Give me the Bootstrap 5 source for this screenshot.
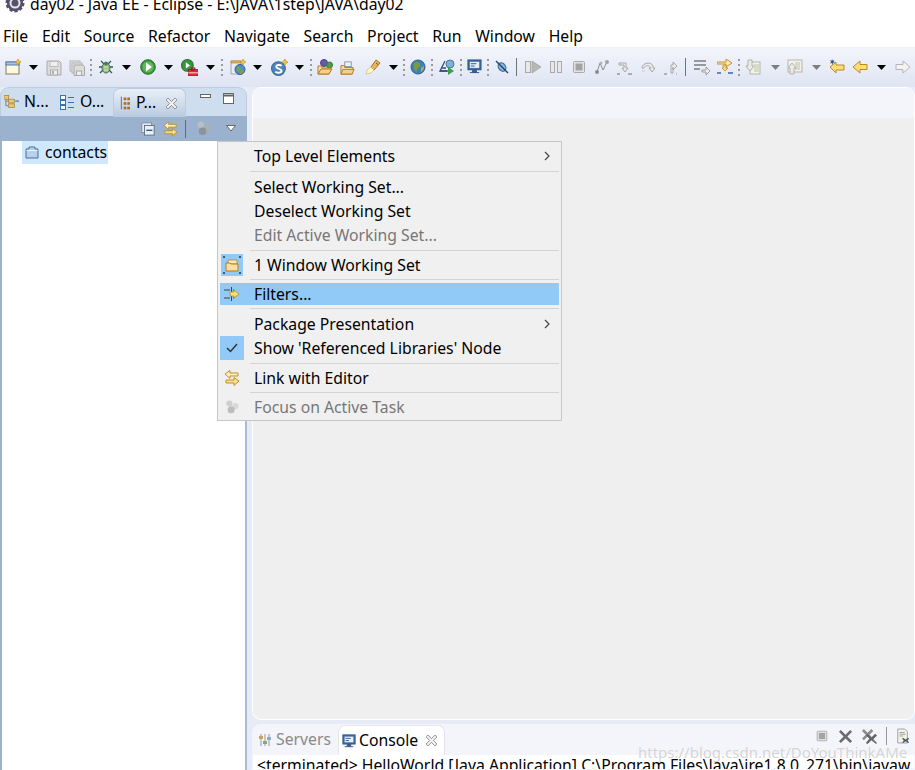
<!DOCTYPE html>
<html lang="en">
<head>
    <meta charset="UTF-8">
    <meta name="viewport" content="width=device-width, initial-scale=1.0">
    <title>day02 - Java EE - Eclipse</title>
    <link href="https://cdn.jsdelivr.net/npm/bootstrap@5.3.0/dist/css/bootstrap.min.css" rel="stylesheet">
    <style>
        html, body { height: 770px; overflow: hidden; }
        body { font-family: "Noto Sans", "Open Sans", sans-serif; font-size: 15.75px; color: #000; background: #e7ebf6; }
        svg { display: block; flex: none; }
        .title-row { height: 25px; background: #fff; padding-left: 5px; gap: 5px; line-height: 9px; }
        .menu-row { height: 22px; background: #fff; line-height: 22px; padding-left: 3px; gap: 13.7px; }
        .tool-row { height: 40px; background: linear-gradient(#f3f5fc, #dfe4f3); border-top: 1px solid #f0f0f0; }
        .work-row { height: 683px; }
        .side-col { width: 247px; }
        .main-col { width: 663px; margin-left: 5px; }

        .tab-strip { height: 29px; background: #cfdeee; border-radius: 9px 9px 0 0; border: 1px solid #bccbdd; border-bottom: 0; }
        .view-tab { height: 28px; gap: 5px; }
        .tab-n { width: 54px; padding-left: 3px; }
        .tab-o { width: 58px; padding-left: 5px; gap: 6px; }
        .tab-p { width: 73px; padding-left: 6px; gap: 6px; }
        .view-tab.tab-on { background: linear-gradient(#e9eff7, #b9cbe0); border: 1px solid #bccbdd; border-bottom: 0; border-radius: 7px 7px 0 0; height: 29px; }
        .tab-close { margin-left: auto; margin-right: 8px; }
        .view-btns { gap: 12px; margin-left: 14px; padding-top: 3px; }
        .view-bar { height: 25px; background: #9ab2ce; padding-right: 11px; }
        .bar-gap-a { margin-left: 8px; }
        .bar-gap-b { margin-left: 7px; margin-right: 10px; }
        .bar-gap-c { margin-left: 15px; }
        .tree-box { height: 629px; background: #fff; border-left: 2px solid #9ab2ce; border-right: 2px solid #a9bcd6; }
        .tree-sel { width: 86px; height: 23px; margin-left: 20px; background: #cde8ff; gap: 6px; padding-left: 3px; }

        .editor-box { height: 633px; background: #efefef; border-radius: 9px; border: 1px solid #fff; overflow: hidden; }
        .editor-head { height: 30px; background: #f3f5fb; }
        .console-box { height: 46px; margin-top: 4px; background: #fff; border-radius: 9px 0 0 0; border: 1px solid #f5f6fb; overflow: hidden; }
        .console-head { height: 30px; background: #f3f5fb; }
        .console-tab { height: 30px; background: #fff; border: 1px solid #e3e6ef; border-bottom: 0; border-radius: 7px 7px 0 0; gap: 3px; width: 107px; padding-left: 3px; margin-left: 1px; }
        .console-close { margin-left: 5px; }
        .tab-off { color: #8a8a8a; width: 84px; gap: 4px; padding-left: 5px; }
        .console-tools { gap: 9px; padding: 0 4px 8px 0; }
        .console-text { padding-left: 4px; line-height: 20px; white-space: nowrap; }
        .mark-text { position: absolute; left: 638px; top: 741px; color: rgba(170,170,170,.5); font-size: 15px; white-space: nowrap; text-shadow: 0 0 1px #fff; }

        .eclipse-menu.dropdown-menu { position: absolute; left: 217px; top: 141px; width: 345px; height: 280px; padding: 2px; background: #f0f0f0; border: 1px solid #c6c6c6; border-radius: 0; display: block; }
        .eclipse-menu .dropdown-item { height: 24px; padding: 0; color: #000; line-height: 24px; background: none; font-size: 15.75px; }
        .eclipse-menu .dropdown-item.disabled { color: #777; }
        .eclipse-menu .dropdown-item.item-hot { background: #91c9f7; height: 22px; line-height: 22px; }
        .eclipse-menu .dropdown-divider { height: 1px; margin-left: 30px; margin-right: 0; background: #d3d3d3; border: 0; opacity: 1; }
        .eclipse-menu .sep-3-3 { margin-top: 3px; margin-bottom: 3px; }
        .eclipse-menu .sep-3-2 { margin-top: 3px; margin-bottom: 2px; }
        .eclipse-menu .sep-2-3 { margin-top: 2px; margin-bottom: 3px; }
        .eclipse-menu .sep-2-2 { margin-top: 2px; margin-bottom: 2px; }
        .menu-gutter { width: 24px; height: 100%; margin-right: 10px; }
        .gutter-on { background: #91c9f7; }
        .menu-arrow { margin-left: auto; margin-right: 9px; }
    </style>
</head>
<body>
    <svg width="0" height="0" class="position-absolute">
        <defs>
            <symbol id="i-new" viewBox="0 0 16 16"><rect x="1" y="3" width="13" height="12" fill="#fdf8de" stroke="#7f7b68"/><rect x="1" y="3" width="13" height="3" fill="#a6c4ea" stroke="#5b7dab"/><path d="M13 0l1 2 2 1-2 1-1 2-1-2-2-1 2-1z" fill="#f3c84a" stroke="#b78a1f" stroke-width=".6"/></symbol>
            <symbol id="i-save" viewBox="0 0 16 16"><path d="M1 1h12l2 2v12H1z" fill="#dcdcdc" stroke="#aaa"/><rect x="4" y="1.500" width="8" height="5" fill="#efefef" stroke="#bbb"/><rect x="4.500" y="10" width="7" height="5" fill="#efefef" stroke="#aaa"/><rect x="6" y="11" width="2" height="3" fill="#aaa"/></symbol>
            <symbol id="i-saveall" viewBox="0 0 16 16"><rect x="1" y="1" width="10" height="10" fill="#e2e2e2" stroke="#b5b5b5"/><rect x="3" y="3" width="10" height="10" fill="#e2e2e2" stroke="#b5b5b5"/><path d="M5 5h9l1.500 1.500V15.500H5z" fill="#dcdcdc" stroke="#a8a8a8"/><rect x="7.500" y="11" width="5" height="4.500" fill="#efefef" stroke="#aaa"/></symbol>
            <symbol id="i-debug" viewBox="0 0 16 16"><path d="M3 2l3 3M13 2l-3 3M1 8h3M12 8h3M2 14l3-3M14 14l-3-3" stroke="#2e5c55" stroke-width="1.300" fill="none"/><ellipse cx="8" cy="9" rx="4" ry="5" fill="#9cc07b" stroke="#3c6c60"/><circle cx="8" cy="4.500" r="2" fill="#47766c"/><path d="M6 8h4M6 11h4" stroke="#dbe8c5"/></symbol>
            <symbol id="i-run" viewBox="0 0 16 16"><circle cx="8" cy="8" r="7.300" fill="#37983b" stroke="#2b6f32"/><circle cx="8" cy="8" r="5.500" fill="#64b65a"/><path d="M6 3.500l6 4.500-6 4.500z" fill="#fff"/></symbol>
            <symbol id="i-cov" viewBox="0 0 16 16"><circle cx="6" cy="6" r="5.500" fill="#37983b" stroke="#2b6f32"/><path d="M4.500 3l4 3-4 3z" fill="#fff"/><rect x="7" y="10" width="9" height="6" fill="#e32a3a" stroke="#a1101d" stroke-width=".7"/><rect x="10" y="8.500" width="3" height="2" fill="none" stroke="#a1101d"/><path d="M7 13h9" stroke="#fff" stroke-width=".8"/></symbol>
            <symbol id="i-webproj" viewBox="0 0 16 16"><path d="M1 2h10v13H1z" fill="#e8edf5" stroke="#9aa5b8"/><path d="M1 2h10v2H1z" fill="#e7b95a" stroke="#b4882b" stroke-width=".7"/><circle cx="10" cy="10.500" r="5" fill="#4d8fc7" stroke="#2e5f90"/><path d="M7 8c2-1 3 0 3 2s3 1 4 1c0 2-2 4-4 4 0-2-1-2-2-3-1-2-2-2-1-4z" fill="#8d9b3e"/><path d="M13 0l1 2 2 1-2 1-1 2-1-2-2-1 2-1z" fill="#f3c84a" stroke="#b78a1f" stroke-width=".6"/></symbol>
            <symbol id="i-sbean" viewBox="0 0 16 16"><circle cx="7" cy="9" r="6.500" fill="#4c84bb" stroke="#3a6b9c"/><path d="M10 6.500C8.500 5 4.500 5.500 5 7.500s5 1.500 5 3.500-4 2.500-6 1" fill="none" stroke="#fff" stroke-width="1.800"/><path d="M13 0l1 2 2 1-2 1-1 2-1-2-2-1 2-1z" fill="#f3c84a" stroke="#b78a1f" stroke-width=".6"/></symbol>
            <symbol id="i-opentype" viewBox="0 0 16 16"><circle cx="7" cy="4" r="3.500" fill="#6a58a8" stroke="#4d3f85"/><circle cx="12.500" cy="6" r="3" fill="#4aa04a" stroke="#2f7a32"/><path d="M1 7h4v2h9l-2 6H1z" fill="#fbe4a8" stroke="#b07a26"/><path d="M1 15l3-5h11l-3 5z" fill="#f6d083" stroke="#b07a26"/></symbol>
            <symbol id="i-openf" viewBox="0 0 16 16"><rect x="5" y="2" width="7" height="5" fill="#eef0f4" stroke="#8b95a6"/><path d="M1 6h4v2h9l-1 7H1z" fill="#fbe4a8" stroke="#b07a26"/><path d="M1 15l2-5h12l-2 5z" fill="#f6d083" stroke="#b07a26"/></symbol>
            <symbol id="i-torch" viewBox="0 0 16 16"><path d="M11 1l4 3-6 7-3-3z" fill="#e9b760" stroke="#a8701f"/><path d="M6 8l3 3-3 3-5 1 1-4z" fill="#fdf7c9" stroke="#c7b888" stroke-width=".7"/><path d="M11 4l2 1.500" stroke="#7a5416"/></symbol>
            <symbol id="i-globe" viewBox="0 0 16 16"><circle cx="8" cy="8" r="7" fill="#3d83bb" stroke="#2f5f8a"/><path d="M4 4c3-2 5-1 6 1s-1 3-2 4-1 3-2 4C5 11 3 9 4 4z" fill="#7d9a3a"/><path d="M11 9l3-2c0 3-1 5-3 6z" fill="#d6a23a"/></symbol>
            <symbol id="i-ant" viewBox="0 0 16 16"><circle cx="11" cy="5" r="4" fill="#7db2d8" stroke="#47779c"/><path d="M6 2L1 12h8" fill="none" stroke="#334f8c" stroke-width="1.300"/><path d="M1 12h7M3 9h4" stroke="#334f8c" stroke-width="1.300"/><path d="M9 8l6 4-6 4z" fill="#3a9f47"/></symbol>
            <symbol id="i-display" viewBox="0 0 16 16"><rect x="1" y="1" width="14" height="10.500" fill="#3f6fa9" stroke="#2c5283"/><rect x="3" y="3" width="10" height="6.500" fill="#e8f0f8"/><path d="M4 5h6M4 7.500h4" stroke="#2c5283"/><path d="M6 12h4v2H6zM3 14.500h10" stroke="#2c5283" fill="#3f6fa9"/></symbol>
            <symbol id="i-skip" viewBox="0 0 16 16"><ellipse cx="8" cy="8" rx="3.500" ry="4.500" fill="#8bb6d8" stroke="#3a6a96" stroke-width="1.200" transform="rotate(-35 8 8)"/><path d="M2 2l12 12" stroke="#24466f" stroke-width="1.400"/></symbol>
            <symbol id="i-resume" viewBox="0 0 16 16"><rect x="0.500" y="2.500" width="5" height="11" fill="#e8e8e8" stroke="#a9a9a9"/><path d="M7 2l9 6-9 6z" fill="#b7b7b7" stroke="#9f9f9f" stroke-width=".7"/></symbol>
            <symbol id="i-pause" viewBox="0 0 16 16"><rect x="2.500" y="2.500" width="4" height="11" fill="#e8e8e8" stroke="#a9a9a9"/><rect x="9.500" y="2.500" width="4" height="11" fill="#e8e8e8" stroke="#a9a9a9"/></symbol>
            <symbol id="i-stop" viewBox="0 0 16 16"><rect x="2.500" y="2.500" width="11" height="11" rx="1" fill="#e3e3e3" stroke="#a9a9a9"/><rect x="4.500" y="4.500" width="7" height="7" fill="#a3a3a3"/></symbol>
            <symbol id="i-drop" viewBox="0 0 16 16"><path d="M3 13l3-9 3 7 4-8" fill="none" stroke="#8d8d8d"/><circle cx="3" cy="13" r="2" fill="#8d8d8d"/><circle cx="13" cy="3" r="2" fill="#a2a2a2"/><circle cx="7" cy="4" r="1.500" fill="#b5b5b5"/></symbol>
            <symbol id="i-into" viewBox="0 0 16 16"><path d="M2 3h7v5h2l-3 4-3-4h2V5H2z" fill="#ececec" stroke="#a8a8a8"/><path d="M0 14h3M11 14h4" stroke="#999" stroke-width="1.400"/></symbol>
            <symbol id="i-over" viewBox="0 0 16 16"><path d="M1 8C1 3 10 1 12 6v2h2l-3 4-3-4h2C9 5 4 5 3 8z" fill="#ececec" stroke="#a8a8a8"/><path d="M1 10h3v2H1z" fill="#dcdcdc"/></symbol>
            <symbol id="i-ret" viewBox="0 0 16 16"><path d="M7 13V5h2V2l4 4-4 4V7H9v6z" fill="#ececec" stroke="#a8a8a8"/><path d="M0 14h3" stroke="#999" stroke-width="1.400"/><path d="M12 14h1" stroke="#999"/></symbol>
            <symbol id="i-wrap" viewBox="0 0 16 16"><path d="M0 2h12M0 6h12M0 10h6" stroke="#7c7c7c" stroke-width="1.700"/><path d="M8 11h4V8l4 4-4 4v-3H8z" fill="#efefef" stroke="#8b8b8b" stroke-width=".8"/></symbol>
            <symbol id="i-filter" viewBox="0 0 16 16"><path d="M0 3h9V0l6 4-6 4V5H0z" fill="#fdeaa8" stroke="#c28a22" stroke-width=".9"/><path d="M6 6h3v3h2l-3 3-3-3h1z" fill="#f9d97c" stroke="#c28a22" stroke-width=".8"/><path d="M0 14h4M11 14h5" stroke="#3d679e" stroke-width="1.500"/></symbol>
            <symbol id="i-next" viewBox="0 0 16 16"><rect x="5" y="3" width="10" height="12" fill="#f2f2e8" stroke="#b5b5a8"/><path d="M9 6h5M9 8h5M9 10h5M9 12h5" stroke="#b9c3b2"/><path d="M3 1h4v6h2l-4 5-4-5h2z" fill="#ececec" stroke="#b2b2a0"/></symbol>
            <symbol id="i-prev" viewBox="0 0 16 16"><rect x="1" y="1" width="14" height="12" fill="#f2f2e8" stroke="#b5b5a8"/><path d="M8 4h5M8 6h5M8 8h5M8 10h5" stroke="#b9c3b2"/><path d="M5 4l4 5H7v6H3V9H1z" fill="#ececec" stroke="#b2b2a0"/></symbol>
            <symbol id="i-backstar" viewBox="0 0 16 16"><path d="M1 8l6-5v3h8v5H7v3z" fill="#fbdf75" stroke="#bd8a1c"/><path d="M3 0l.8 1.800L5.500 1 4.500 2.500l1.500 1-2 .2L3.500 6 3 4 1 4.500l1.200-1.700L.8 1.300l1.900.4z" fill="#24558f"/></symbol>
            <symbol id="i-back" viewBox="0 0 16 16"><path d="M1 8l7-6v3.500h7v5H8V14z" fill="#fbdf75" stroke="#bd8a1c"/></symbol>
            <symbol id="i-fwd" viewBox="0 0 16 16"><path d="M15 8L8 2v3.500H1v5h7V14z" fill="#f3f3f3" stroke="#b5b5b5"/></symbol>
            <symbol id="i-link" viewBox="0 0 16 16"><path d="M1 4l5-3.500V3h8v3H6v2.500z" fill="#fcefc0" stroke="#c08f29"/><path d="M15 11l-5-3.500V10H2v3h8v2.500z" fill="#fbe08b" stroke="#c08f29"/></symbol>
            <symbol id="i-focus" viewBox="0 0 16 16"><circle cx="5" cy="4" r="3.500" fill="#cfcfcf"/><circle cx="12" cy="7" r="3.500" fill="#d8d8d8"/><circle cx="7" cy="11" r="4" fill="#bdbdbd"/></symbol>
            <symbol id="i-focus-dim" viewBox="0 0 16 16"><circle cx="5" cy="4" r="3.500" fill="#b9bfc7"/><circle cx="12" cy="7" r="3.500" fill="#aab0b8"/><circle cx="7" cy="11" r="4" fill="#8e939b"/></symbol>
            <symbol id="i-collapse" viewBox="0 0 16 16"><rect x="1" y="1" width="11" height="11" fill="#e5ebf2" stroke="#7e8a98"/><rect x="4" y="4" width="11" height="11" fill="#e8f0f8" stroke="#5d6a78"/><path d="M6 9.500h7" stroke="#24558f" stroke-width="1.500"/></symbol>
            <symbol id="i-x" viewBox="0 0 12 12"><path d="M2 0l4 4 4-4 2 2-4 4 4 4-2 2-4-4-4 4-2-2 4-4-4-4z" fill="#f6f6f6" stroke="#666" stroke-width=".8"/></symbol>
            <symbol id="i-dark-x" viewBox="0 0 16 16"><path d="M3 1l5 5 5-5 2 2-5 5 5 5-2 2-5-5-5 5-2-2 5-5-5-5z" fill="#6c6c6c"/></symbol>
            <symbol id="i-dark-xx" viewBox="0 0 16 16"><path d="M2 0l4 4 4-4 2 2-4 4 4 4-2 2-4-4-4 4-2-2 4-4-4-4z" fill="#8c8c8c"/><path d="M6 5l4 4 4-4 2 2-4 4 4 4-1 1-5-4-4 4-2-1 4-5-4-3z" fill="#656565"/></symbol>
            <symbol id="i-rmdoc" viewBox="0 0 16 16"><path d="M2 0h8l3 3v13H2z" fill="#f7f3df" stroke="#8f9baa"/><path d="M4 4h6M4 6h7M4 8h4" stroke="#8f9baa"/><path d="M8 10l3 2 3-2 1 1-2 2 2 2-1 1-3-2-3 2-1-1 2-2-2-2z" fill="#4b5d70"/></symbol>
        </defs>
    </svg>

    <div class="title-row d-flex align-items-start">
        <svg width="20" height="14" viewBox="0 0 20 14"><circle cx="10" cy="3" r="8" fill="#55516b" stroke="#55516b" stroke-width="3" stroke-dasharray="3 2"/><circle cx="10" cy="3" r="8" fill="#55516b"/><circle cx="10" cy="3" r="5.500" fill="#e5e5ea"/><circle cx="10" cy="3" r="3.500" fill="#55516b"/></svg>
        <span>day02 - Java EE - Eclipse - E:\JAVA\1step\JAVA\day02</span>
    </div>

    <div class="menu-row d-flex">
        <span>File</span>
        <span>Edit</span>
        <span>Source</span>
        <span>Refactor</span>
        <span>Navigate</span>
        <span>Search</span>
        <span>Project</span>
        <span>Run</span>
        <span>Window</span>
        <span>Help</span>
    </div>

    <div class="tool-row">
        <svg width="915" height="39" viewBox="0 47 915 39">
            <g fill="#000"><path d="M29 64h9l-4.500 5z"/><path d="M122 64h9l-4.500 5z"/><path d="M164 64h9l-4.500 5z"/><path d="M206 64h9l-4.500 5z"/><path d="M253 64h9l-4.500 5z"/><path d="M295 64h9l-4.500 5z"/><path d="M389 64h9l-4.500 5z"/><path d="M877 64h9l-4.500 5z"/></g>
            <g fill="#7d7d7d"><path d="M771 64h9l-4.500 5z"/><path d="M812 64h9l-4.500 5z"/></g>
            <g stroke="#9a9a9a" stroke-width="2" stroke-dasharray="2 3"><path d="M91 58v17M222 58v17M311 58v17M404 58v17M432 58v17M461 58v17M488 58v17M739 58v17"/></g>
            <path d="M516.500 57v18M685.500 57v18" stroke="#6f7479"/>
            <use href="#i-new" x="5" y="58" width="16" height="16"/>
            <use href="#i-save" x="46" y="59" width="16" height="16"/>
            <use href="#i-saveall" x="69" y="59" width="16" height="16"/>
            <use href="#i-debug" x="98" y="58" width="16" height="16"/>
            <use href="#i-run" x="140" y="58" width="16" height="16"/>
            <use href="#i-cov" x="181" y="58" width="17" height="17"/>
            <use href="#i-webproj" x="230" y="58" width="16" height="16"/>
            <use href="#i-sbean" x="271" y="58" width="17" height="17"/>
            <use href="#i-opentype" x="317" y="58" width="16" height="16"/>
            <use href="#i-openf" x="340" y="59" width="15" height="15"/>
            <use href="#i-torch" x="365" y="58" width="16" height="16"/>
            <use href="#i-globe" x="410" y="58" width="16" height="16"/>
            <use href="#i-ant" x="439" y="58" width="16" height="16"/>
            <use href="#i-display" x="467" y="58" width="15" height="15"/>
            <use href="#i-skip" x="494" y="58" width="16" height="16"/>
            <use href="#i-resume" x="525" y="58" width="16" height="16"/>
            <use href="#i-pause" x="548" y="58" width="16" height="16"/>
            <use href="#i-stop" x="571" y="58" width="16" height="16"/>
            <use href="#i-drop" x="594" y="58" width="16" height="16"/>
            <use href="#i-into" x="617" y="59" width="16" height="16"/>
            <use href="#i-over" x="641" y="59" width="16" height="16"/>
            <use href="#i-ret" x="664" y="59" width="16" height="16"/>
            <use href="#i-wrap" x="694" y="58" width="16" height="16"/>
            <use href="#i-filter" x="717" y="58" width="16" height="16"/>
            <use href="#i-next" x="745" y="58" width="16" height="16"/>
            <use href="#i-prev" x="787" y="58" width="16" height="16"/>
            <use href="#i-backstar" x="829" y="58" width="16" height="16"/>
            <use href="#i-back" x="852" y="58" width="16" height="16"/>
            <use href="#i-fwd" x="895" y="58" width="16" height="16"/>
        </svg>
    </div>

    <div class="work-row d-flex">
        <div class="side-col">
            <div class="tab-strip d-flex">
                <div class="view-tab tab-n d-flex align-items-center">
                    <svg width="15" height="14" viewBox="0 0 16 14"><path d="M2 2v9h4M2 6h4" stroke="#777" fill="none"/><rect x="0" y="0" width="5" height="4" fill="#e9c77a" stroke="#a07a2c" stroke-width=".7"/><rect x="5" y="4" width="6" height="4" fill="#e9c77a" stroke="#a07a2c" stroke-width=".7"/><rect x="5" y="9" width="6" height="4" fill="#e9c77a" stroke="#a07a2c" stroke-width=".7"/><path d="M12 6h4" stroke="#24558f"/></svg>
                    <span>N...</span>
                </div>
                <div class="view-tab tab-o d-flex align-items-center">
                    <svg width="14" height="15" viewBox="0 0 14 15"><rect x=".5" y=".5" width="5" height="4" fill="#fff" stroke="#3a74b0"/><rect x=".5" y="5.500" width="5" height="4" fill="#fff" stroke="#3a74b0"/><rect x=".5" y="10.500" width="5" height="4" fill="#fff" stroke="#3a74b0"/><path d="M8 2.500h6M8 7.500h6M8 12.500h6" stroke="#3a74b0"/></svg>
                    <span>O...</span>
                </div>
                <div class="view-tab tab-p tab-on d-flex align-items-center">
                    <svg width="10" height="14" viewBox="0 0 11 14"><path d="M1.500 0v14" stroke="#666"/><rect x="4" y="1" width="3" height="3" fill="#b86a25"/><rect x="8" y="1" width="3" height="3" fill="#b86a25"/><rect x="4" y="6" width="3" height="3" fill="#b86a25"/><rect x="8" y="6" width="3" height="3" fill="#b86a25"/><rect x="4" y="11" width="3" height="3" fill="#b86a25"/><rect x="8" y="11" width="3" height="3" fill="#b86a25"/></svg>
                    <span>P...</span>
                    <svg class="tab-close" width="11" height="11"><use href="#i-x"/></svg>
                </div>
                <div class="view-btns d-flex">
                    <svg width="11" height="10" viewBox="0 0 11 10"><rect x=".5" y="3.500" width="10" height="3" fill="#fff" stroke="#666"/></svg>
                    <svg width="11" height="14" viewBox="0 0 11 14"><rect x=".5" y="2.500" width="10" height="10" fill="#fff" stroke="#666"/><path d="M1 4.500h9" stroke="#666" stroke-width="2"/></svg>
                </div>
            </div>
            <div class="view-bar d-flex align-items-center justify-content-end">
                <svg width="14" height="14"><use href="#i-collapse"/></svg>
                <svg class="bar-gap-a" width="15" height="16"><use href="#i-link"/></svg>
                <svg class="bar-gap-b" width="1" height="18"><rect width="1" height="18" fill="#5e6d80"/></svg>
                <svg width="15" height="15"><use href="#i-focus-dim"/></svg>
                <svg class="bar-gap-c" width="10" height="7" viewBox="0 0 10 7"><path d="M.5.500h9L5 6z" fill="#fff" stroke="#666"/></svg>
            </div>
            <div class="tree-box">
                <div class="tree-sel d-flex align-items-center">
                    <svg width="14" height="13" viewBox="0 0 14 13"><path d="M1 3h3V1h6v2h3v9H1z" fill="#b7d2ee" stroke="#4d6c96"/><path d="M1.500 4.500h11" stroke="#e9f2fb"/></svg>
                    <span>contacts</span>
                </div>
            </div>
        </div>

        <div class="main-col">
            <div class="editor-box">
                <div class="editor-head"></div>
            </div>
            <div class="console-box">
                <div class="console-head d-flex align-items-stretch">
                    <div class="tab-off d-flex align-items-center">
                        <svg width="14" height="14" viewBox="0 0 14 14"><path d="M3 1v12M7 1v12M11 1v12" stroke="#999"/><rect x="1" y="3" width="4" height="3" fill="#c9a45c"/><rect x="5" y="8" width="4" height="3" fill="#8aa86a"/><rect x="9" y="4" width="4" height="3" fill="#8faac6"/></svg>
                        <span>Servers</span>
                    </div>
                    <div class="console-tab d-flex align-items-center">
                        <svg width="14" height="14"><use href="#i-display"/></svg>
                        <span>Console</span>
                        <svg class="console-close" width="11" height="11"><use href="#i-x"/></svg>
                    </div>
                    <div class="console-tools ms-auto d-flex align-items-center">
                        <svg width="14" height="14"><use href="#i-stop"/></svg>
                        <svg width="15" height="15"><use href="#i-dark-x"/></svg>
                        <svg width="15" height="15"><use href="#i-dark-xx"/></svg>
                        <svg width="1" height="18"><rect width="1" height="18" fill="#999"/></svg>
                        <svg width="14" height="16"><use href="#i-rmdoc"/></svg>
                    </div>
                </div>
                <div class="console-text">&lt;terminated&gt; HelloWorld [Java Application] C:\Program Files\Java\jre1.8.0_271\bin\javaw.exe</div>
            </div>
        </div>
    </div>

    <div class="mark-text">https://blog.csdn.net/DoYouThinkAMe</div>

    <div class="eclipse-menu dropdown-menu show">
        <a class="dropdown-item d-flex"><span class="menu-gutter"></span>Top Level Elements<svg class="menu-arrow align-self-center" width="6" height="10" viewBox="0 0 6 10"><path d="M1 1l4 4-4 4" fill="none" stroke="#444" stroke-width="1.200"/></svg></a>
        <hr class="dropdown-divider sep-3-3">
        <a class="dropdown-item d-flex"><span class="menu-gutter"></span>Select Working Set...</a>
        <a class="dropdown-item d-flex"><span class="menu-gutter"></span>Deselect Working Set</a>
        <a class="dropdown-item d-flex disabled"><span class="menu-gutter"></span>Edit Active Working Set...</a>
        <hr class="dropdown-divider sep-3-2">
        <a class="dropdown-item d-flex"><span class="menu-gutter d-flex align-items-center justify-content-center"><svg class="gutter-on" width="22" height="22" viewBox="0 0 22 22"><path d="M7 6h9v4H7z" fill="#fbeabf" stroke="#b9924a"/><path d="M5 9h4l1 1h7v7H5z" fill="#fbdf9e" stroke="#b07a26"/><path d="M2 2h2v2H2zM18 2h2v2h-2zM2 18h2v2H2zM18 18h2v2h-2z" fill="#3b5a7a"/></svg></span>1 Window Working Set</a>
        <hr class="dropdown-divider sep-2-3">
        <a class="dropdown-item item-hot d-flex"><span class="menu-gutter d-flex align-items-center justify-content-center"><svg width="16" height="14" viewBox="0 0 16 14"><path d="M0 3h6M9 3h1M0 11h6M9 11h1M7.500 0v6M7.500 8v6" stroke="#444"/><path d="M6 5h4V3l5 4-5 4V9H6z" fill="#fbdf75" stroke="#bd8a1c" stroke-width=".8"/></svg></span>Filters...</a>
        <hr class="dropdown-divider sep-3-3">
        <a class="dropdown-item d-flex"><span class="menu-gutter"></span>Package Presentation<svg class="menu-arrow align-self-center" width="6" height="10" viewBox="0 0 6 10"><path d="M1 1l4 4-4 4" fill="none" stroke="#444" stroke-width="1.200"/></svg></a>
        <a class="dropdown-item d-flex"><span class="menu-gutter gutter-on d-flex align-items-center justify-content-center"><svg width="12" height="10" viewBox="0 0 12 10"><path d="M1 5l3.500 3.500L11 1" fill="none" stroke="#333" stroke-width="1.500"/></svg></span>Show 'Referenced Libraries' Node</a>
        <hr class="dropdown-divider sep-3-2">
        <a class="dropdown-item d-flex"><span class="menu-gutter d-flex align-items-center justify-content-center"><svg width="16" height="16"><use href="#i-link"/></svg></span>Link with Editor</a>
        <hr class="dropdown-divider sep-2-2">
        <a class="dropdown-item d-flex disabled"><span class="menu-gutter d-flex align-items-center justify-content-center"><svg width="14" height="14"><use href="#i-focus"/></svg></span>Focus on Active Task</a>
    </div>

    <script src="https://cdn.jsdelivr.net/npm/bootstrap@5.3.0/dist/js/bootstrap.bundle.min.js"></script>
</body>
</html>
